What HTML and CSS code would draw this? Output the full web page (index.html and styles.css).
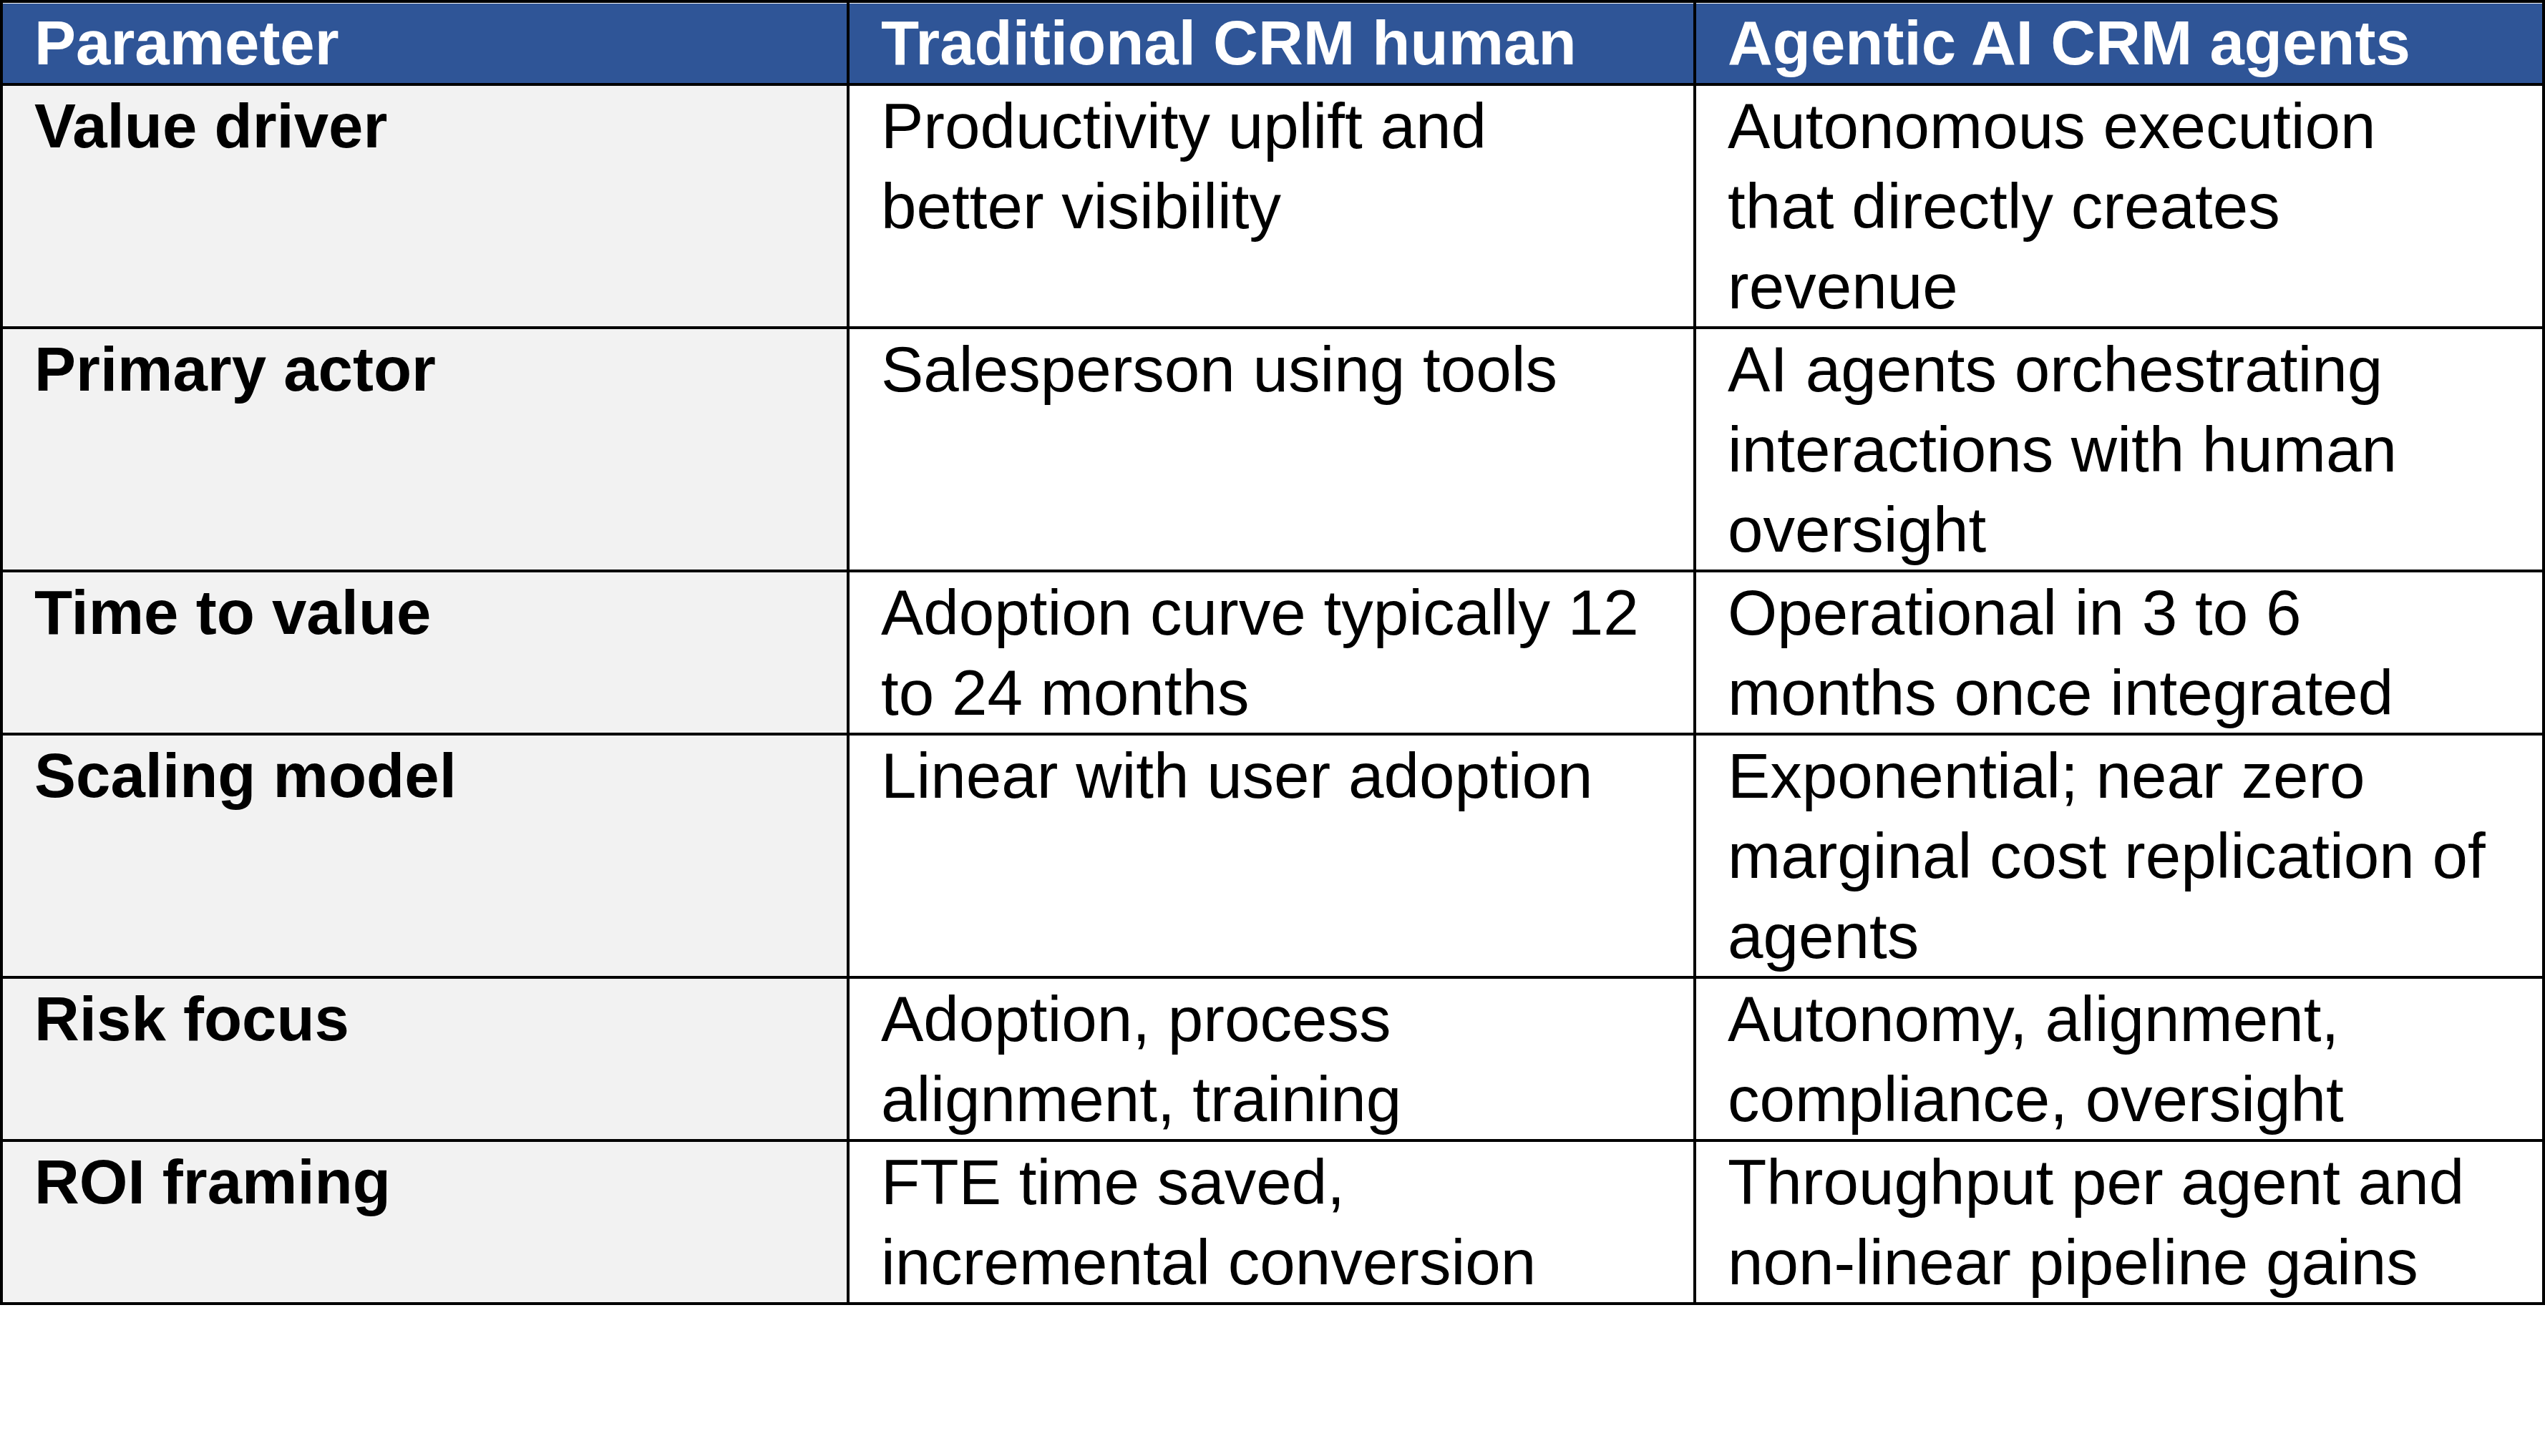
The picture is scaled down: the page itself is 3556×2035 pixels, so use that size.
FILE: index.html
```html
<!DOCTYPE html>
<html lang="en">
<head>
<meta charset="utf-8">
<title>Traditional CRM vs Agentic AI CRM</title>
<link rel="stylesheet" href="styles.css">
</head>
<body>
<table class="compare">
  <colgroup>
    <col class="c1"><col class="c2"><col class="c3">
  </colgroup>
  <thead>
    <tr>
      <th>Parameter</th>
      <th>Traditional CRM human</th>
      <th>Agentic AI CRM agents</th>
    </tr>
  </thead>
  <tbody>
    <tr>
      <th class="param">Value driver</th>
      <td>Productivity uplift and<br>better visibility</td>
      <td>Autonomous execution<br>that directly creates<br>revenue</td>
    </tr>
    <tr>
      <th class="param">Primary actor</th>
      <td>Salesperson using tools</td>
      <td>AI agents orchestrating<br>interactions with human<br>oversight</td>
    </tr>
    <tr>
      <th class="param">Time to value</th>
      <td>Adoption curve typically 12<br>to 24 months</td>
      <td>Operational in 3 to 6<br>months once integrated</td>
    </tr>
    <tr>
      <th class="param">Scaling model</th>
      <td>Linear with user adoption</td>
      <td>Exponential; near zero<br>marginal cost replication of<br>agents</td>
    </tr>
    <tr>
      <th class="param">Risk focus</th>
      <td>Adoption, process<br>alignment, training</td>
      <td>Autonomy, alignment,<br>compliance, oversight</td>
    </tr>
    <tr>
      <th class="param">ROI framing</th>
      <td>FTE time saved,<br>incremental conversion</td>
      <td>Throughput per agent and<br>non-linear pipeline gains</td>
    </tr>
  </tbody>
</table>
</body>
</html>
```

FILE: styles.css
```css
html, body {
  margin: 0;
  padding: 0;
  background: #ffffff;
}

body {
  font-family: "Liberation Sans", Arial, sans-serif;
  color: #000000;
}

.compare {
  width: 3556px;
  table-layout: fixed;
  border-collapse: separate;
  border-spacing: 0;
  border-top: 4px solid #000000;
  border-left: 4px solid #000000;
}

.c1 { width: 1183px; }
.c2 { width: 1183px; }
.c3 { width: 1186px; }

.compare th,
.compare td {
  border-right: 4px solid #000000;
  border-bottom: 4px solid #000000;
  padding: 0 8px 0 44px;
  text-align: left;
  vertical-align: top;
  line-height: 112px;
  white-space: nowrap;
}

.compare thead th {
  background: #2f5597;
  color: #ffffff;
  font-weight: 700;
  font-size: 87px;
  box-shadow: inset 0 1px 0 #ffffff;
}

.compare tbody th.param {
  background: #f2f2f2;
  font-weight: 700;
  font-size: 87px;
}

.compare tbody td {
  background: #ffffff;
  font-weight: 400;
  font-size: 89px;
}
```
